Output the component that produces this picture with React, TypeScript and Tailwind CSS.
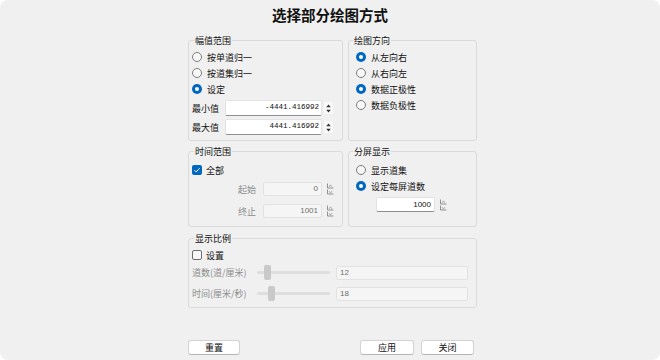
import React from "react";

const cjk = "font-['Noto_Sans_CJK_SC','Noto_Sans',sans-serif]";

function Radio({ checked, label, disabled }: { checked?: boolean; label: string; disabled?: boolean }) {
  return (
    <div className="flex h-4 items-center">
      {checked ? (
        <span className="flex h-[10px] w-[10px] items-center justify-center rounded-full bg-[#0067c0]">
          <span className="h-[4px] w-[4px] rounded-full bg-white" />
        </span>
      ) : (
        <span className="h-[10px] w-[10px] rounded-full border border-[#7c7c7c] bg-[#f7f7f7]" />
      )}
      <span className={`ml-[5px] text-[9px] leading-none ${disabled ? "text-[#8c8c8c]" : "text-[#111]"}`}>{label}</span>
    </div>
  );
}

function Check({ checked, label }: { checked?: boolean; label: string }) {
  return (
    <div className="flex h-4 items-center">
      {checked ? (
        <span className="flex h-[10px] w-[10px] items-center justify-center rounded-[2px] bg-[#0067c0]">
          <svg width="8" height="8" viewBox="0 0 8 8">
            <path d="M1.5 4.2l1.7 1.7 3.4-3.6" fill="none" stroke="white" strokeWidth="1" />
          </svg>
        </span>
      ) : (
        <span className="h-[10px] w-[10px] rounded-[2px] border border-[#6d6d6d] bg-[#f7f7f7]" />
      )}
      <span className="ml-[4px] text-[9px] leading-none text-[#111]">{label}</span>
    </div>
  );
}

function Group({
  title,
  className,
  legend,
  children,
}: {
  title: string;
  className?: string;
  legend?: string;
  children: React.ReactNode;
}) {
  return (
    <fieldset className={`rounded-[3px] border border-[#dadada] ${className ?? ""}`}>
      <legend className={`px-[1px] text-[9px] leading-[13px] text-[#111] ${legend ?? "ml-[2px]"}`}>{title}</legend>
      {children}
    </fieldset>
  );
}

function Spin() {
  return (
    <span className="ml-[2px] flex h-[12px] w-[9px] items-center justify-center rounded-[2px] bg-[#fafafa]">
      <svg width="5" height="9" viewBox="0 0 5 9">
        <path d="M2.5 0.5L4.8 3.2H0.2z" fill="#333" />
        <path d="M2.5 8.5L4.8 5.8H0.2z" fill="#333" />
      </svg>
    </span>
  );
}

function TinyArrows() {
  return (
    <svg width="7" height="12" viewBox="0 0 7 12" className="ml-[5px]">
      <path d="M0.5 0.5v4.5h6" fill="none" stroke="#7a7a7a" strokeWidth="0.8" />
      <path d="M2 4l1.5-2.2L5 4" fill="none" stroke="#9a9a9a" strokeWidth="0.8" />
      <path d="M0.5 6.5v4.5h6" fill="none" stroke="#7a7a7a" strokeWidth="0.8" />
      <path d="M2 8l1.5 2.2L5 8" fill="none" stroke="#9a9a9a" strokeWidth="0.8" />
    </svg>
  );
}

function ValueRow({ label, value }: { label: string; value: string }) {
  return (
    <div className="flex h-4 items-center">
      <span className="w-[33px] text-[9px] leading-none text-[#111]">{label}</span>
      <div className="flex h-4 w-[97px] items-center justify-end rounded-[2px] border border-[#e3e3e3] border-b-[#8f8f8f] bg-white pr-[2px] font-['Liberation_Mono',monospace] text-[7.5px] text-[#111]">
        {value}
      </div>
      <Spin />
    </div>
  );
}

function RangeRow({ label, value, className }: { label: string; value: string; className?: string }) {
  return (
    <div className={`flex h-[14px] items-center pl-[46px] ${className ?? ""}`}>
      <span className="w-[25px] text-[9px] leading-none text-[#8c8c8c]">{label}</span>
      <div className="flex h-[14px] w-[59px] items-center justify-end rounded-[2px] border border-[#e2e2e2] bg-[#f5f5f5] pr-[3px] font-['Liberation_Sans',sans-serif] text-[8px] text-[#6e6e6e]">
        {value}
      </div>
      <TinyArrows />
    </div>
  );
}

function SliderRow({ label, value, pos, className }: { label: string; value: string; pos: number; className?: string }) {
  return (
    <div className={`flex h-[15px] items-center ${className ?? ""}`}>
      <span className="w-[65px] text-[9px] leading-none text-[#8c8c8c]">{label}</span>
      <div className="relative flex h-[15px] w-[73px] items-center">
        <div className="h-[3px] w-full rounded-full bg-[#dedede]" />
        <div className="absolute top-0 h-[15px] w-[7px] rounded-[2px] bg-[#c9c9c9]" style={{ left: pos }} />
      </div>
      <div className="ml-[6px] flex h-[14px] w-[132px] items-center rounded-[2px] border border-[#e2e2e2] bg-[#f5f5f5] pl-[3px] font-['Liberation_Sans',sans-serif] text-[8px] text-[#6e6e6e]">
        {value}
      </div>
    </div>
  );
}

function Button({ label, className }: { label: string; className?: string }) {
  return (
    <button className={`flex h-[15px] items-center justify-center rounded-[3px] border border-[#d2d2d2] border-b-[#b5b5b5] bg-white text-[9px] leading-none text-[#111] ${className ?? ""}`}>
      {label}
    </button>
  );
}

export default function App() {
  return (
    <div className={`h-[360px] w-[660px] bg-white ${cjk}`}>
      <div className="flex h-full flex-col rounded-[8px] bg-[#f0f0f0]">
        <div className="h-[31px] pt-[5px] text-center text-[14.5px] font-bold leading-[20px] text-[#111]">选择部分绘图方式</div>

        <div className="ml-[188px] mt-[3px] flex w-[289px] flex-col">
          <div className="flex gap-[5px]">
            <Group title="幅值范围" className="h-[107px] w-[155px] px-[3px]">
              <div className="flex flex-col pt-[2px]">
                <Radio label="按单道归一" />
                <Radio label="按道集归一" />
                <Radio checked label="设定" />
                <div className="mt-[3px]">
                  <ValueRow label="最小值" value="-4441.416992" />
                </div>
                <div className="mt-[3px]">
                  <ValueRow label="最大值" value="4441.416992" />
                </div>
              </div>
            </Group>
            <Group title="绘图方向" legend="-ml-[3px]" className="h-[107px] w-[129px] px-[7px]">
              <div className="flex flex-col pt-[2px]">
                <Radio checked label="从左向右" />
                <Radio label="从右向左" />
                <Radio checked label="数据正极性" />
                <Radio label="数据负极性" />
              </div>
            </Group>
          </div>

          <div className="mt-[4px] flex gap-[5px]">
            <Group title="时间范围" className="h-[82px] w-[155px] px-[3px]">
              <div className="flex flex-col pt-[4px]">
                <Check checked label="全部" />
                <RangeRow label="起始" value="0" className="mt-[4px]" />
                <RangeRow label="终止" value="1001" className="mt-[8px]" />
              </div>
            </Group>
            <Group title="分屏显示" legend="-ml-[3px]" className="h-[82px] w-[129px] px-[7px]">
              <div className="flex flex-col pt-[4px]">
                <Radio label="显示道集" />
                <Radio checked label="设定每屏道数" />
                <div className="mt-[3px] flex items-center pl-[20px]">
                  <div className="flex h-[15px] w-[59px] items-center justify-end rounded-[2px] border border-[#e3e3e3] border-b-[#8f8f8f] bg-white pr-[3px] font-['Liberation_Sans',sans-serif] text-[8px] text-[#111]">
                    1000
                  </div>
                  <TinyArrows />
                </div>
              </div>
            </Group>
          </div>

          <Group title="显示比例" className="mt-[5px] h-[76px] w-[289px] px-[3px]">
            <div className="flex flex-col pt-[2px]">
              <Check label="设置" />
              <SliderRow label="道数(道/厘米)" value="12" pos={7} className="mt-[2px]" />
              <SliderRow label="时间(厘米/秒)" value="18" pos={11} className="mt-[6px]" />
            </div>
          </Group>
        </div>

        <div className="ml-[188px] mt-[32px] flex w-[286px]">
          <Button label="重置" className="w-[52px]" />
          <Button label="应用" className="ml-auto w-[54px]" />
          <Button label="关闭" className="ml-[7px] w-[53px]" />
        </div>
      </div>
    </div>
  );
}
